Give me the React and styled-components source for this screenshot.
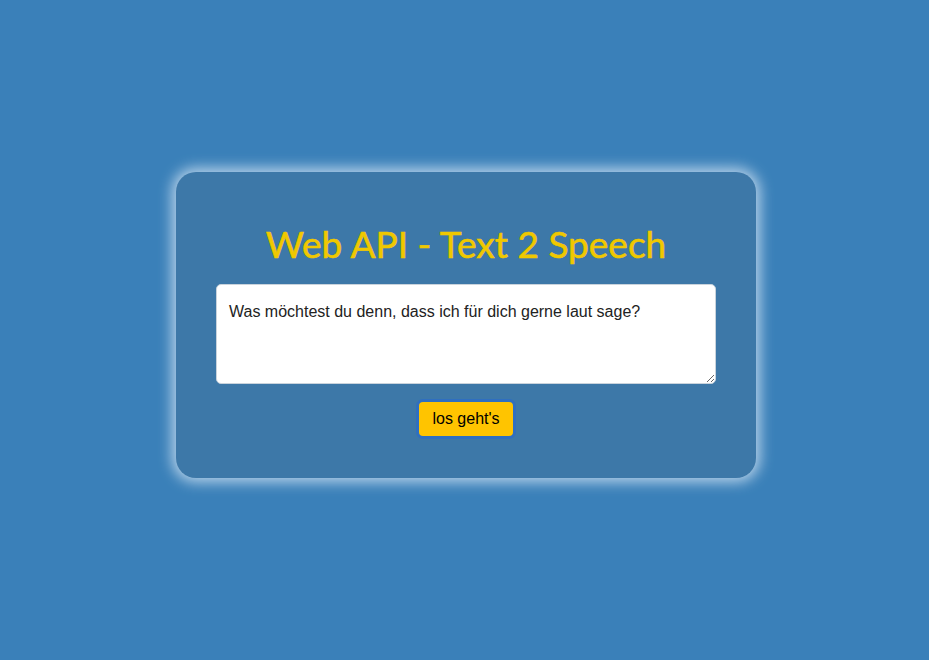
import React, { useState } from 'react';
import styled, { createGlobalStyle } from 'styled-components';

const GlobalStyle = createGlobalStyle`
  html, body {
    margin: 0;
    padding: 0;
    background: #3a80b9;
  }
  body {
    font-family: "Liberation Sans", Arial, sans-serif;
  }
`;

const Page = styled.main`
  min-height: 100vh;
  box-sizing: border-box;
  padding: 0 0 10px 3px;
  display: flex;
  align-items: center;
  justify-content: center;
`;

const Card = styled.section`
  width: 580px;
  box-sizing: border-box;
  padding: 48px 40px 39px;
  background: #3d78a8;
  border-radius: 20px;
  box-shadow: 0 0 14px 4px rgba(225, 238, 250, 0.75);
  display: flex;
  flex-direction: column;
  align-items: center;
`;

const Title = styled.h1`
  margin: 0 0 16px;
  font-family: "Lato", "Open Sans", sans-serif;
  font-weight: 400;
  font-size: 37px;
  line-height: 48px;
  letter-spacing: 0;
  color: #f0c800;
  -webkit-text-stroke: 0.6px #f0c800;
`;

const Input = styled.textarea`
  width: 500px;
  height: 100px;
  box-sizing: border-box;
  padding: 17px 12px;
  border: 1px solid #c9d3dc;
  border-radius: 5px;
  background: #fff;
  color: #222;
  font-family: "Liberation Sans", Arial, sans-serif;
  font-size: 16px;
  line-height: 20px;
  resize: both;
  outline: none;
`;

const Button = styled.button`
  margin-top: 15px;
  height: 40px;
  padding: 0 13px;
  border: 3px solid #2f6fc0;
  border-radius: 7px;
  background: #ffc400;
  color: #000;
  font-family: "Liberation Sans", Arial, sans-serif;
  font-size: 16px;
  cursor: pointer;
`;

export default function App() {
  const [text, setText] = useState('Was möchtest du denn, dass ich für dich gerne laut sage?');

  const speak = () => {
    if (window.speechSynthesis) {
      window.speechSynthesis.speak(new SpeechSynthesisUtterance(text));
    }
  };

  return (
    <>
      <GlobalStyle />
      <Page>
        <Card>
          <Title>Web API - Text 2 Speech</Title>
          <Input value={text} onChange={(e) => setText(e.target.value)} />
          <Button onClick={speak}>los geht's</Button>
        </Card>
      </Page>
    </>
  );
}
